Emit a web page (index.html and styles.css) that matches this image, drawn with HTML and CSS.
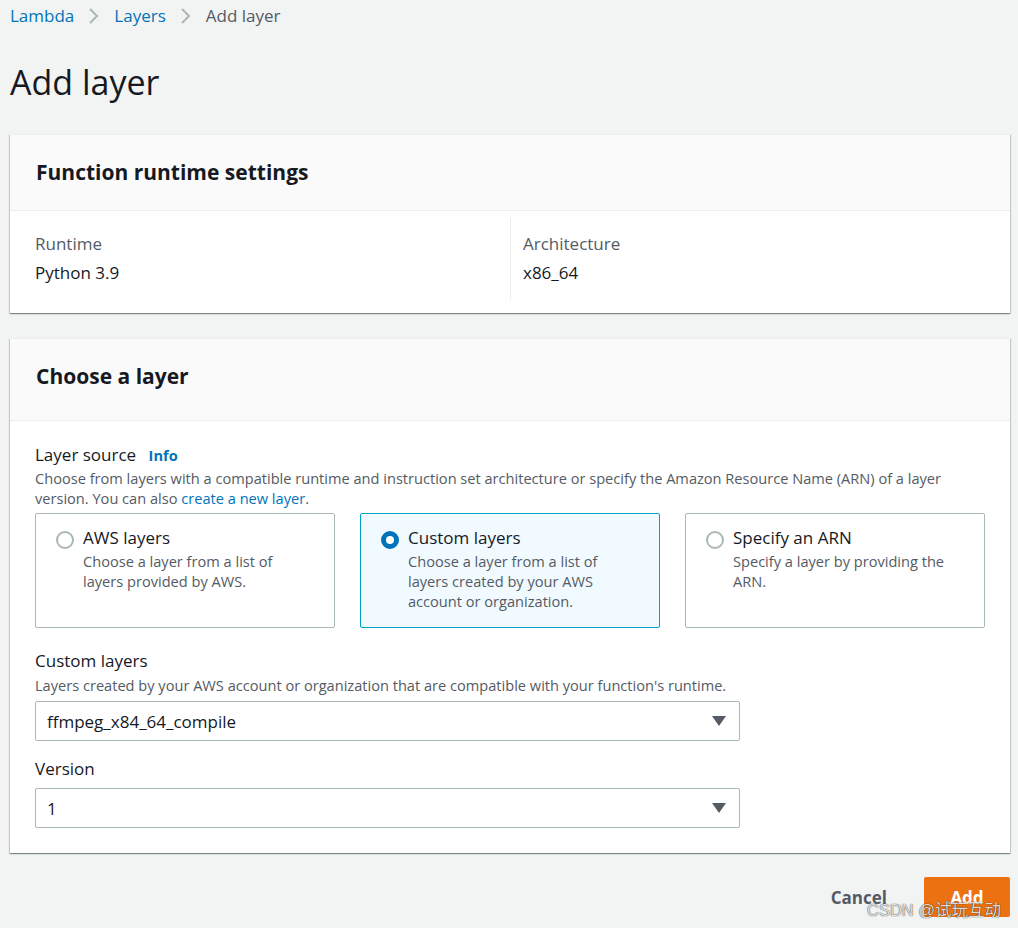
FILE: index.html
```html
<!DOCTYPE html>
<html lang="en">
<head>
    <meta charset="UTF-8">
    <title>Add layer</title>
    <link rel="stylesheet" href="styles.css">
</head>
<body>
    <div class="page">
        <nav class="breadcrumb">
            <a href="#">Lambda</a>
            <span class="chev"><svg width="12" height="18" viewBox="0 0 12 18"><path d="M2 2 L9 9 L2 16" fill="none" stroke="#aab7b8" stroke-width="2"/></svg></span>
            <a href="#">Layers</a>
            <span class="chev"><svg width="12" height="18" viewBox="0 0 12 18"><path d="M2 2 L9 9 L2 16" fill="none" stroke="#aab7b8" stroke-width="2"/></svg></span>
            <span class="current">Add layer</span>
        </nav>

        <h1>Add layer</h1>

        <div class="card">
            <div class="card-header runtime-header">
                <h2>Function runtime settings</h2>
            </div>
            <div class="card-body columns">
                <div class="col">
                    <div class="key">Runtime</div>
                    <div class="value">Python 3.9</div>
                </div>
                <div class="col col-split">
                    <div class="key">Architecture</div>
                    <div class="value">x86_64</div>
                </div>
            </div>
        </div>

        <div class="card">
            <div class="card-header layer-header">
                <h2>Choose a layer</h2>
            </div>
            <div class="card-body layer-body">
                <div class="field-label">Layer source <a href="#" class="info">Info</a></div>
                <p class="field-desc">Choose from layers with a compatible runtime and instruction set architecture or specify the Amazon Resource Name (ARN) of a layer version. You can also <a href="#">create a new layer</a>.</p>

                <div class="tiles">
                    <label class="tile">
                        <span class="radio"></span>
                        <span class="tile-text">
                            <span class="tile-title">AWS layers</span>
                            <span class="tile-desc">Choose a layer from a list of layers provided by AWS.</span>
                        </span>
                    </label>
                    <label class="tile selected">
                        <span class="radio checked"></span>
                        <span class="tile-text">
                            <span class="tile-title">Custom layers</span>
                            <span class="tile-desc">Choose a layer from a list of layers created by your AWS account or organization.</span>
                        </span>
                    </label>
                    <label class="tile">
                        <span class="radio"></span>
                        <span class="tile-text">
                            <span class="tile-title">Specify an ARN</span>
                            <span class="tile-desc">Specify a layer by providing the ARN.</span>
                        </span>
                    </label>
                </div>

                <div class="field">
                    <div class="field-label">Custom layers</div>
                    <p class="field-desc">Layers created by your AWS account or organization that are compatible with your function's runtime.</p>
                    <div class="select">
                        <span>ffmpeg_x84_64_compile</span>
                        <svg width="14" height="10" viewBox="0 0 14 10"><path d="M0 0 H14 L7 10 Z" fill="#545b64"/></svg>
                    </div>
                </div>

                <div class="field field-version">
                    <div class="field-label">Version</div>
                    <div class="select">
                        <span>1</span>
                        <svg width="14" height="10" viewBox="0 0 14 10"><path d="M0 0 H14 L7 10 Z" fill="#545b64"/></svg>
                    </div>
                </div>
            </div>
        </div>

        <div class="actions">
            <button class="cancel">Cancel</button>
            <button class="add">Add</button>
        </div>
    </div>
    <div class="watermark">CSDN @试玩互动</div>
</body>
</html>
```

FILE: styles.css
```css
body {
    margin: 0;
    background-color: #f2f3f3;
    font-family: "Open Sans", "Noto Sans", Arial, sans-serif;
    color: #16191f;
    height: 928px;
    overflow: hidden;
}
a {
    color: #0073bb;
    text-decoration: none;
}
.page {
    padding: 4px 8px 0 10px;
}
.breadcrumb {
    display: flex;
    align-items: center;
    gap: 12px;
    font-size: 17px;
    line-height: 24px;
    height: 24px;
}
.breadcrumb .chev {
    display: flex;
    margin: 0 2px;
}
.breadcrumb .current {
    color: #545b64;
}
h1 {
    font-size: 34px;
    font-weight: 400;
    line-height: 40px;
    margin: 34px 0 32px;
}
.card {
    background: #fff;
    box-shadow: 0 1px 1px 0 rgba(0, 28, 36, 0.3), 1px 1px 1px 0 rgba(0, 28, 36, 0.15), -1px 1px 1px 0 rgba(0, 28, 36, 0.15);
    border-top: 1px solid #eaeded;
    margin-bottom: 25px;
}
.card-header {
    background: #fafafa;
    border-bottom: 1px solid #eaeded;
    padding: 0 26px;
    display: flex;
    align-items: center;
    box-sizing: border-box;
}
.runtime-header {
    height: 76px;
    padding-bottom: 2px;
}
.layer-header {
    height: 82px;
    padding-bottom: 7px;
}
.card-header h2 {
    font-size: 21px;
    font-weight: 700;
    margin: 0;
}
.columns {
    display: grid;
    grid-template-columns: 1fr 1fr;
    padding: 7px 0 13px;
}
.col {
    padding: 14px 25px 15px;
}
.col-split {
    border-left: 1px solid #eaeded;
    padding-left: 12px;
}
.key {
    color: #545b64;
    font-size: 17px;
    line-height: 24px;
}
.value {
    font-size: 17px;
    line-height: 24px;
    margin-top: 5px;
}
.layer-body {
    padding: 22px 25px 25px;
}
.field-label {
    font-size: 17px;
    line-height: 24px;
}
.info {
    font-size: 14.6px;
    font-weight: 700;
    margin-left: 8px;
}
.field-desc {
    margin: 2px 0 0;
    font-size: 14.6px;
    line-height: 20px;
    color: #545b64;
}
.layer-body > .field-desc {
    margin-top: 1px;
}
.tiles {
    display: grid;
    grid-template-columns: 300px 300px 300px;
    gap: 25px;
    margin-top: 5px;
}
.tile {
    display: flex;
    gap: 9px;
    border: 1px solid #aab7b8;
    border-radius: 2px;
    padding: 12px 20px 0;
    box-sizing: border-box;
    height: 115px;
}
.tile.selected {
    background: #f1faff;
    border-color: #00a1c9;
}
.radio {
    flex: none;
    width: 14px;
    height: 14px;
    border: 2px solid #aab7b8;
    border-radius: 50%;
    background: #fff;
    margin-top: 5px;
}
.radio.checked {
    border: 5px solid #0073bb;
    width: 8px;
    height: 8px;
}
.tile-text {
    display: flex;
    flex-direction: column;
}
.tile-title {
    font-size: 17px;
    line-height: 24px;
}
.tile-desc {
    font-size: 14.6px;
    line-height: 20px;
    color: #545b64;
    margin-top: 1px;
}
.field {
    margin-top: 21px;
}
.field .select {
    margin-top: 6px;
}
.field-version {
    margin-top: 16px;
}
.field-version .select {
    margin-top: 7px;
}
.select {
    width: 705px;
    height: 40px;
    box-sizing: border-box;
    border: 1px solid #aab7b8;
    border-radius: 2px;
    display: flex;
    align-items: center;
    justify-content: space-between;
    padding: 0 13px 0 11px;
    font-size: 17px;
}
.actions {
    display: flex;
    justify-content: flex-end;
    align-items: center;
    gap: 37px;
    margin-top: -1px;
}
.actions button {
    font-family: inherit;
    font-size: 17px;
    font-weight: 700;
    border: none;
    cursor: pointer;
}
.cancel {
    background: none;
    color: #545b64;
    padding: 0;
}
.add {
    background: #ec7211;
    color: #fff;
    width: 86px;
    height: 40px;
    border-radius: 2px;
}
.watermark {
    position: absolute;
    left: 867px;
    top: 897px;
    font-family: "Liberation Sans", "Noto Sans CJK SC", sans-serif;
    font-size: 16.5px;
    color: rgba(255, 255, 255, 0.85);
    text-shadow: 0 0 1px rgba(0, 0, 0, 0.7), 0 0 1px rgba(0, 0, 0, 0.5);
}
```
